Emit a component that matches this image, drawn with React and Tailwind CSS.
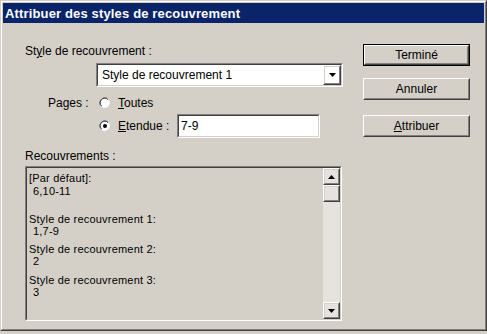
import React from "react";

const Raised = ({ className = "", children, def = false }) => (
  <div className={`${def ? "border border-black" : ""} ${className}`}>
    <div className="w-full h-full border border-t-white border-l-white border-b-[#404040] border-r-[#404040]">
      <div className="w-full h-full border border-t-[#d4d0c8] border-l-[#d4d0c8] border-b-[#808080] border-r-[#808080] flex items-center justify-center">
        {children}
      </div>
    </div>
  </div>
);

const Sunken = ({ className = "", innerClass = "", children }) => (
  <div className={`border border-t-[#808080] border-l-[#808080] border-b-white border-r-white ${className}`}>
    <div className={`w-full h-full border border-t-[#404040] border-l-[#404040] border-b-[#d4d0c8] border-r-[#d4d0c8] ${innerClass}`}>
      {children}
    </div>
  </div>
);

const Radio = ({ checked }) => (
  <svg width="12" height="12" viewBox="0 0 12 12" className="shrink-0">
    <path d="M8 1 A5.5 5.5 0 0 0 1 8" fill="none" stroke="#808080" strokeWidth="1" />
    <circle cx="6" cy="6" r="4.5" fill="white" />
    <path d="M10 3.5 A5.5 5.5 0 0 1 3.5 10.5" fill="none" stroke="#ffffff" strokeWidth="1" />
    <path d="M2.5 9 A4.5 4.5 0 0 1 9 2.5" fill="none" stroke="#404040" strokeWidth="1" />
    {checked && <circle cx="6" cy="6" r="2" fill="black" />}
  </svg>
);

const Tri = ({ up }) => (
  <svg width="7" height="4" viewBox="0 0 7 4">
    {up ? <path d="M3.5 0 L7 4 L0 4 Z" fill="black" /> : <path d="M0 0 L7 0 L3.5 4 Z" fill="black" />}
  </svg>
);

export default function App() {
  const font = { fontFamily: '"Liberation Sans", Arial, sans-serif' };
  return (
    <div
      className="w-[487px] h-[334px] bg-[#d4d0c8] text-black text-[12px] leading-[14px] relative overflow-hidden"
      style={font}
    >
      <div className="w-[487px] h-[331px] border border-t-[#d4d0c8] border-l-[#d4d0c8] border-b-[#404040] border-r-[#404040]">
        <div className="w-full h-full border border-t-white border-l-white border-b-[#808080] border-r-[#808080] p-px">
          <div className="h-[20px] bg-[#0a246a] flex items-center pl-[2px]">
            <span className="text-white font-bold text-[13px] leading-[15px] tracking-[0.15px]">
              Attribuer des styles de recouvrement
            </span>
          </div>
          <div className="flex pl-[22px] pt-[21px]">
            <div className="w-[318px] flex flex-col">
              <div className="h-[14px]">
                St<span className="underline">y</span>le de recouvrement :
              </div>
              <Sunken className="ml-[71px] mt-[5px] w-[247px] h-[24px] bg-white" innerClass="flex items-center">
                <div className="flex-1 pl-[4px]">Style de recouvrement 1</div>
                <Raised className="w-[18px] h-[20px] mr-0">
                  <Tri />
                </Raised>
              </Sunken>
              <div className="flex items-center mt-[9px] h-[14px]">
                <span className="ml-[23px] w-[51px]">Pages :</span>
                <Radio />
                <span className="ml-[7px]">
                  <span className="underline">T</span>outes
                </span>
              </div>
              <div className="flex items-center mt-[4px] h-[24px]">
                <span className="ml-[74px]">
                  <Radio checked />
                </span>
                <span className="ml-[7px] w-[59px]">
                  <span className="underline">E</span>tendue :
                </span>
                <Sunken className="w-[143px] h-[24px] bg-white" innerClass="flex items-center pl-[2px]">
                  7-9
                </Sunken>
              </div>
              <div className="mt-[11px] h-[14px]">Recouvrements :</div>
              <Sunken className="mt-[3px] w-[317px] h-[155px]" innerClass="flex">
                <div className="flex-1 pl-[2px] pt-[4px] text-[11px] leading-[12px] tracking-[0.2px]">
                  <div>[Par défaut]:</div>
                  <div className="pl-[4px] mt-[1px]">6,10-11</div>
                  <div className="mt-[16px]">Style de recouvrement 1:</div>
                  <div className="pl-[4px]">1,7-9</div>
                  <div className="mt-[6px]">Style de recouvrement 2:</div>
                  <div className="pl-[4px]">2</div>
                  <div className="mt-[7px]">Style de recouvrement 3:</div>
                  <div className="pl-[4px]">3</div>
                </div>
                <div className="w-[17px] h-full flex flex-col bg-[#e6e3de]">
                  <Raised className="w-[17px] h-[17px]">
                    <Tri up />
                  </Raised>
                  <Raised className="w-[17px] h-[17px]" />
                  <div className="flex-1" />
                  <Raised className="w-[17px] h-[17px]">
                    <Tri />
                  </Raised>
                </div>
              </Sunken>
            </div>
            <div className="ml-[20px] flex flex-col">
              <Raised def className="w-[107px] h-[22px]">
                Terminé
              </Raised>
              <Raised className="w-[107px] h-[22px] mt-[12px]">Annuler</Raised>
              <Raised className="w-[107px] h-[22px] mt-[15px]">
                <span>
                  <span className="underline">A</span>ttribuer
                </span>
              </Raised>
            </div>
          </div>
        </div>
      </div>
    </div>
  );
}
